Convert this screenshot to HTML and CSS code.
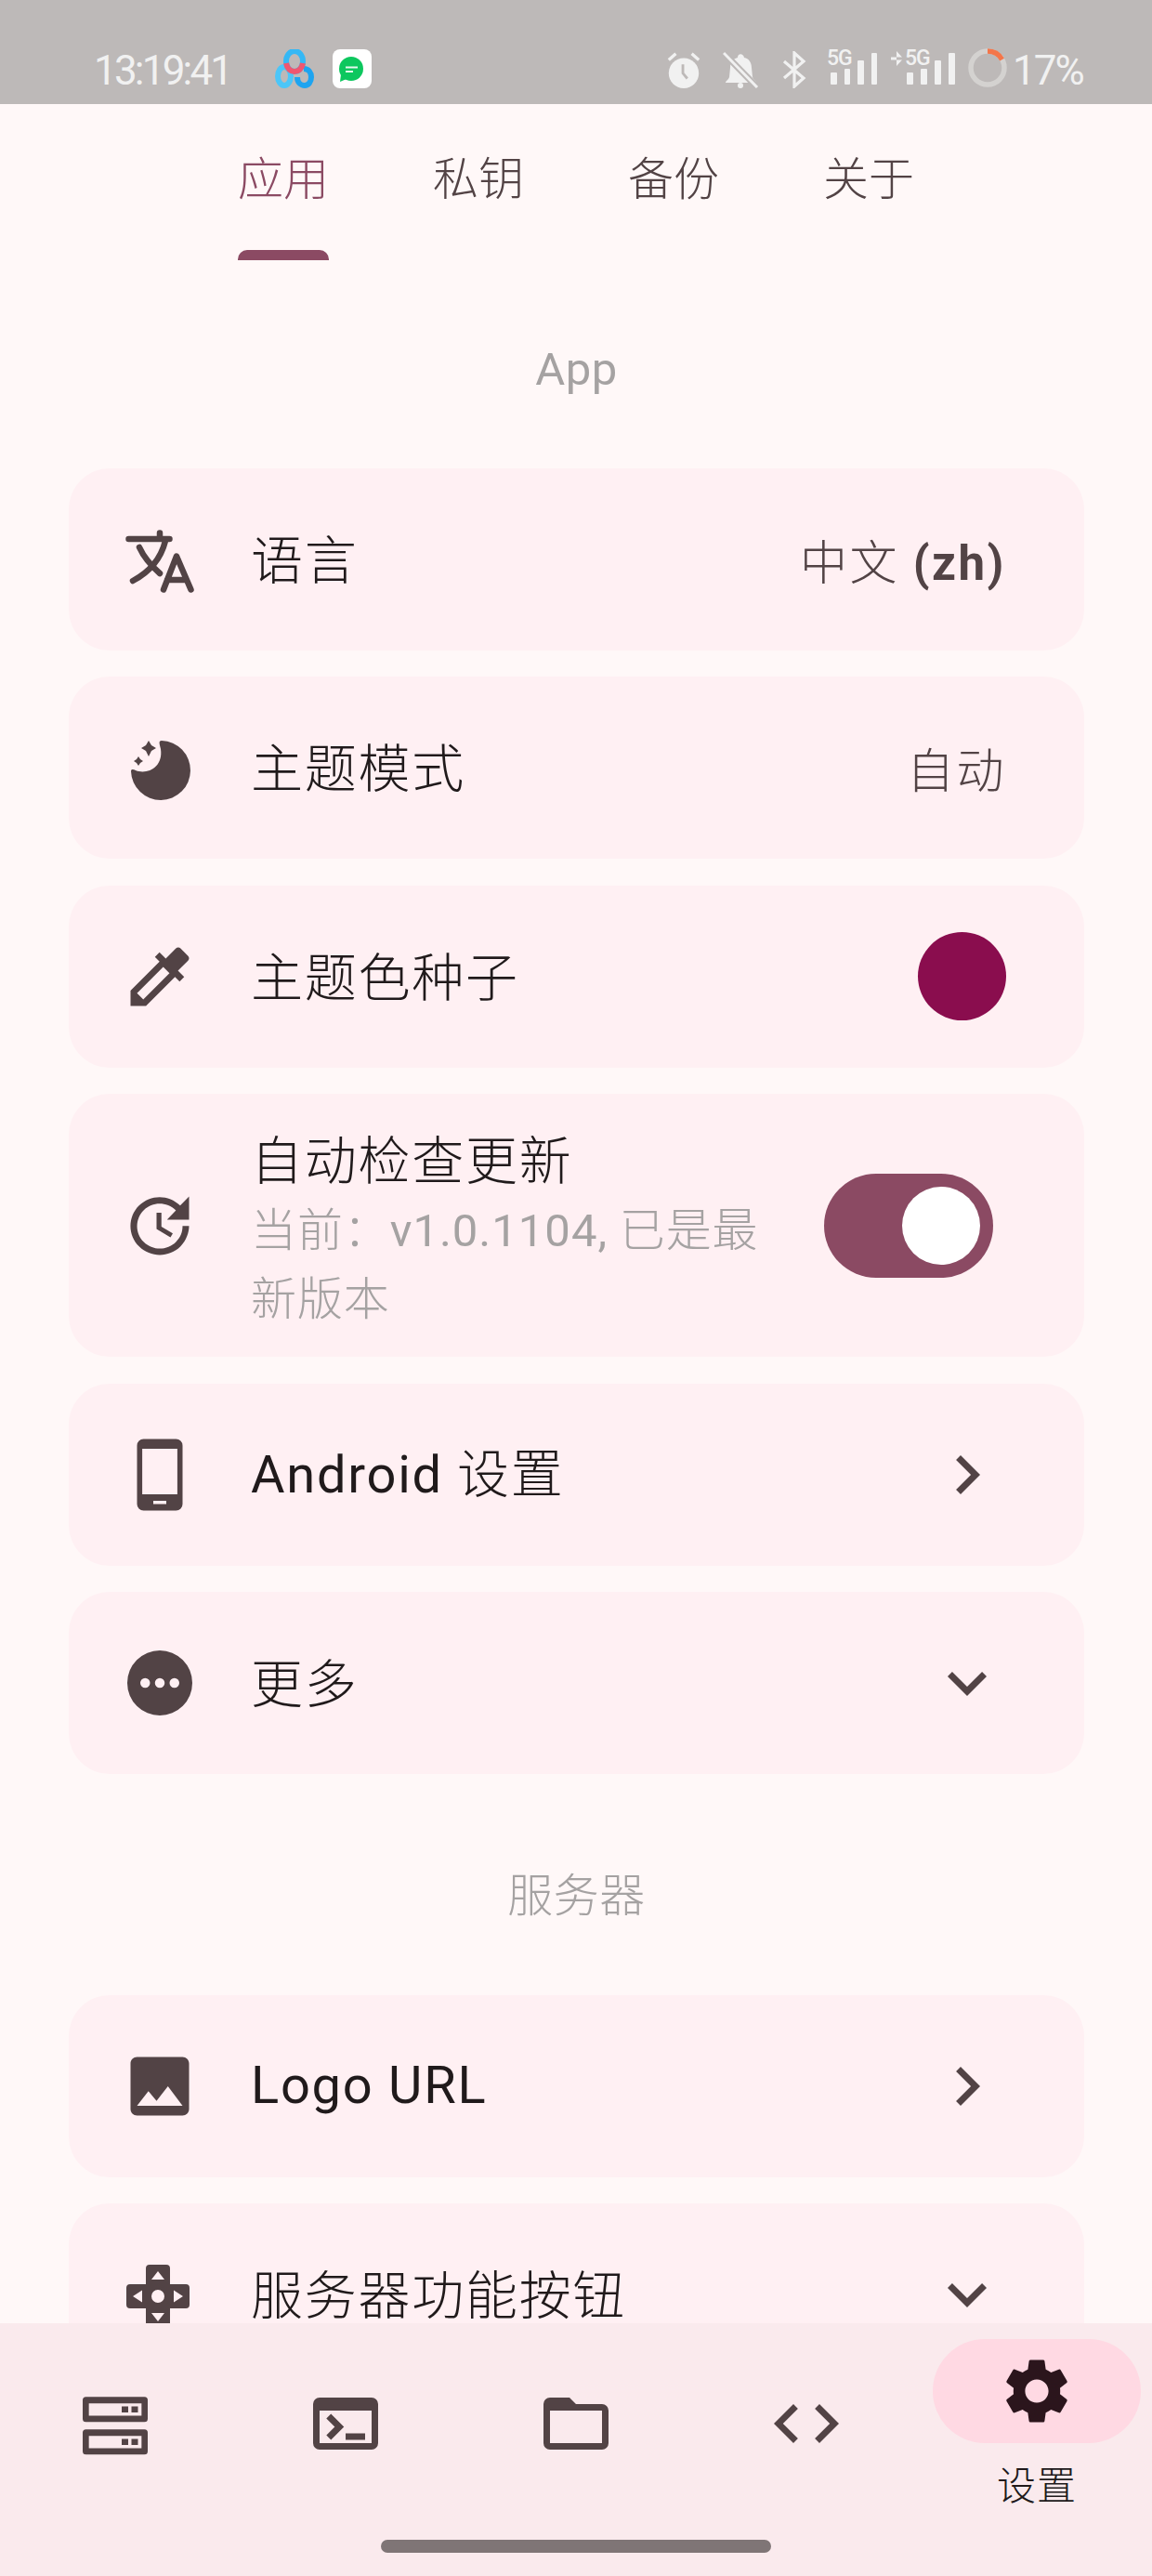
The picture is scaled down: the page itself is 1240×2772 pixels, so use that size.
FILE: index.html
```html
<!DOCTYPE html>
<html lang="zh">
<head>
    <meta charset="UTF-8">
    <title>设置</title>
    <link rel="stylesheet" href="styles.css">
</head>
<body>
<div class="screen">
    <div class="status-bar">
        <div class="status-left">
            <span class="clock">13:19:41</span>
            <svg class="app-icon baidu" viewBox="0 0 42 42"><g fill="none" stroke-width="6"><ellipse cx="21" cy="13" rx="9" ry="11" stroke="#35b8f5"/><ellipse cx="10" cy="29" rx="7" ry="10" stroke="#4cc6f8"/><path d="M24 30c0 6 4 9 8 9s7-4 7-9-3-9-8-9" stroke="#1ea4f0"/><path d="M12 15c1 6 5 9 9 9s8-3 9-9" stroke="#f0566f"/></g></svg>
            <svg class="app-icon chat" viewBox="0 0 42 42"><rect width="42" height="42" rx="8" fill="#fff"/><circle cx="20" cy="21" r="13" fill="#0dc75e"/><path d="M9 27l-1 8 7-3z" fill="#0dc75e"/><path d="M14 19.500h13M14 24h8" stroke="#e6f8ee" stroke-width="1.800" fill="none"/></svg>
        </div>
        <div class="status-right">
            <svg class="st-icon alarm" viewBox="0 0 36 42"><circle cx="18" cy="25" r="17" fill="#f1f1f1"/><path d="M17 15v10l5 6" stroke="#bdb9b8" stroke-width="3" fill="none"/><path d="M1 10l8-7M35 10l-8-7" stroke="#f1f1f1" stroke-width="3.500"/></svg>
            <svg class="st-icon mute" viewBox="0 0 39 40"><path d="M3 34c0-2 3-3 4-6l1-10c0-7 4-10 8-11 0-5 6-5 7 0 5 1 8 5 8 11l1 10c1 3 4 4 4 6z" fill="#f1f1f1"/><circle cx="19" cy="37" r="3" fill="#f1f1f1"/><path d="M1 2l36 37" stroke="#bdb9b8" stroke-width="7"/><path d="M1 2l36 37" stroke="#f1f1f1" stroke-width="3"/></svg>
            <svg class="st-icon bt" viewBox="0 0 26 40"><path d="M2 11l21 18-10 9V2l10 9L2 29" stroke="#f1f1f1" stroke-width="3.200" fill="none"/></svg>
            <div class="signal">
                <span class="five-g">5G</span>
                <i class="bar b1"></i><i class="bar b2"></i><i class="bar b3"></i><i class="bar b4"></i>
            </div>
            <div class="signal second">
                <span class="arrows"></span>
                <span class="five-g">5G</span>
                <i class="bar b1"></i><i class="bar b2"></i><i class="bar b3"></i><i class="bar b4"></i>
            </div>
            <svg class="battery" viewBox="0 0 42 42"><circle cx="21" cy="21" r="18" fill="none" stroke="#d4d2d0" stroke-width="5.500"/><path d="M21 3a18 18 0 0 1 15.600 9" fill="none" stroke="#f4764a" stroke-width="5.500"/></svg>
            <span class="percent">17%</span>
        </div>
    </div>

    <div class="tabs">
        <div class="tab active">应用<i class="indicator"></i></div>
        <div class="tab">私钥</div>
        <div class="tab">备份</div>
        <div class="tab">关于</div>
    </div>

    <div class="content">
        <div class="section-title first"><span class="latin">App</span></div>

        <div class="card">
            <svg class="icon" viewBox="0 0 84 84"><g fill="none" stroke="#524345" stroke-width="6.500" stroke-linecap="round" stroke-linejoin="round"><path d="M8.500 20h44M42 13.500V20M48 22C43 42 30 56 13 65M20 29c5 11 13 20 22 28M46 74.500l14-36 15.500 36M50 64h20"/></g></svg>
            <div class="label cjk">语言</div>
            <div class="value">中文 <b>(zh)</b></div>
        </div>

        <div class="card">
            <svg class="icon" viewBox="0 0 84 84"><path d="M44 13A32 32 0 1 1 11 46C11 43 14 44 16 45C28 50 46 42 43 22C42 17 40 13 44 13z"/><path d="M30 13l3 5 5 3-5 3-3 6-3-6-5-3 5-3zM19 30l2 3 3 2-3 2-2 3-2-3-3-2 3-2z"/></svg>
            <div class="label cjk">主题模式</div>
            <div class="value">自动</div>
        </div>

        <div class="card">
            <svg class="icon" viewBox="0 0 24 24"><path d="M20.710 5.630l-2.340-2.340c-.39-.39-1.020-.39-1.410 0l-3.120 3.120-1.930-1.910-1.410 1.410 1.420 1.420L3 16.250V21h4.750l8.920-8.920 1.420 1.420 1.410-1.410-1.920-1.920 3.120-3.120c.4-.4.4-1.030.01-1.420zM6.920 19L5 17.080l8.060-8.060 1.920 1.920L6.920 19z"/></svg>
            <div class="label cjk">主题色种子</div>
            <div class="swatch"></div>
        </div>

        <div class="card tall">
            <svg class="icon" viewBox="0 0 24 24"><path d="M21 10.120h-6.780l2.740-2.820c-2.730-2.700-7.150-2.800-9.880-.1-2.730 2.710-2.730 7.080 0 9.790s7.150 2.710 9.880 0C18.320 15.650 19 14.080 19 12.100h2c0 1.980-.88 4.550-2.640 6.290-3.510 3.480-9.210 3.480-12.720 0-3.500-3.470-3.530-9.110-.02-12.580s9.140-3.470 12.650 0L21 3v7.120zM12.500 8v4.250l3.500 2.080-.72 1.210L11 13V8h1.500z"/></svg>
            <div class="label-group">
                <div class="label">自动检查更新</div>
                <div class="sub">当前：<span class="version">v1.0.1104,</span> 已是最<br>新版本</div>
            </div>
            <div class="switch"><i class="thumb"></i></div>
        </div>

        <div class="card">
            <svg class="icon" viewBox="0 0 24 24"><path fill-rule="evenodd" d="M7 1h10a2 2 0 0 1 2 2v18a2 2 0 0 1-2 2H7a2 2 0 0 1-2-2V3a2 2 0 0 1 2-2zM6.600 4v14h10.800V4zM10 20v1h4v-1z"/></svg>
            <div class="label"><span class="latin">Android</span> 设置</div>
            <svg class="chevron" viewBox="0 0 24 24"><path d="M10 6L8.590 7.410 13.170 12l-4.580 4.590L10 18l6-6z"/></svg>
        </div>

        <div class="card">
            <svg class="icon" viewBox="0 0 24 24"><path d="M12 2a10 10 0 1 0 0 20 10 10 0 0 0 0-20zM7.500 13.500a1.500 1.500 0 1 1 0-3 1.500 1.500 0 0 1 0 3zm4.500 0a1.500 1.500 0 1 1 0-3 1.500 1.500 0 0 1 0 3zm4.500 0a1.500 1.500 0 1 1 0-3 1.500 1.500 0 0 1 0 3z"/></svg>
            <div class="label cjk">更多</div>
            <svg class="chevron" viewBox="0 0 24 24"><path d="M16.590 8.590L12 13.170 7.410 8.590 6 10l6 6 6-6z"/></svg>
        </div>

        <div class="section-title second">服务器</div>

        <div class="card">
            <svg class="icon" viewBox="0 0 24 24"><path d="M21 19V5c0-1.100-.9-2-2-2H5c-1.100 0-2 .9-2 2v14c0 1.100.9 2 2 2h14c1.100 0 2-.9 2-2zM8.500 13.500l2.500 3.010L14.500 12l4.500 6H5l3.500-4.500z"/></svg>
            <div class="label logo"><span class="latin">Logo URL</span></div>
            <svg class="chevron" viewBox="0 0 24 24"><path d="M10 6L8.590 7.410 13.170 12l-4.580 4.590L10 18l6-6z"/></svg>
        </div>

        <div class="card">
            <svg class="icon" viewBox="0 0 84 84"><path fill-rule="evenodd" d="M31 10h18a4 4 0 0 1 4 4v17h17a4 4 0 0 1 4 4v18a4 4 0 0 1-4 4H53v17a4 4 0 0 1-4 4H31a4 4 0 0 1-4-4V57H10a4 4 0 0 1-4-4V35a4 4 0 0 1 4-4h17V14a4 4 0 0 1 4-4zM40 17l-7 9h14zM40 71l7-9H33zM13 44l10 6.500v-13zM67 44l-10-6.500v13zM40 37a7 7 0 1 0 0 14 7 7 0 0 0 0-14z"/></svg>
            <div class="label cjk">服务器功能按钮</div>
            <svg class="chevron" viewBox="0 0 24 24"><path d="M16.590 8.590L12 13.170 7.410 8.590 6 10l6 6 6-6z"/></svg>
        </div>
    </div>

    <div class="bottom-nav">
        <div class="nav-item">
            <svg class="nav-icon" viewBox="0 0 24 24"><path fill-rule="evenodd" d="M3 3.750h18a1 1 0 0 1 1 1v5.750a1 1 0 0 1-1 1H3a1 1 0 0 1-1-1V4.750a1 1 0 0 1 1-1zM3.900 5.750V9.600h16.200V5.750zM3 13.750h18a1 1 0 0 1 1 1v5.750a1 1 0 0 1-1 1H3a1 1 0 0 1-1-1v-5.750a1 1 0 0 1 1-1zM3.900 15.750v3.850h16.200v-3.850zM14 6.700h2v1.900h-2zm3 0h2v1.900h-2zm-3 10h2v1.900h-2zm3 0h2v1.900h-2z"/></svg>
        </div>
        <div class="nav-item">
            <svg class="nav-icon" viewBox="0 0 24 24"><path d="M20 4H4a2 2 0 0 0-2 2v12a2 2 0 0 0 2 2h16a2 2 0 0 0 2-2V6a2 2 0 0 0-2-2zm0 14H4V8h16v10zm-2-1h-6v-2h6v2zM7.500 17l-1.410-1.410L8.670 13l-2.590-2.590L7.500 9l4 4-4 4z"/></svg>
        </div>
        <div class="nav-item">
            <svg class="nav-icon" viewBox="0 0 24 24"><path d="M20 6h-8l-2-2H4a2 2 0 0 0-2 2v12a2 2 0 0 0 2 2h16a2 2 0 0 0 2-2V8a2 2 0 0 0-2-2zm0 12H4V8h16v10z"/></svg>
        </div>
        <div class="nav-item">
            <svg class="nav-icon" viewBox="0 0 24 24"><path d="M9.400 16.600L4.800 12l4.600-4.600L8 6l-6 6 6 6zm5.200 0l4.600-4.600-4.600-4.600L16 6l6 6-6 6z"/></svg>
        </div>
        <div class="nav-item selected">
            <div class="pill">
                <svg class="nav-icon gear" viewBox="0 0 24 24"><path d="M19.140 12.940c.04-.3.060-.61.060-.94 0-.32-.02-.64-.07-.94l2.030-1.580a.49.490 0 0 0 .12-.61l-1.920-3.320a.488.488 0 0 0-.59-.22l-2.390.96c-.5-.38-1.030-.7-1.620-.94l-.36-2.540a.484.484 0 0 0-.48-.41h-3.840c-.24 0-.43.170-.47.410l-.36 2.540c-.59.240-1.130.570-1.620.94l-2.390-.96c-.22-.08-.47 0-.59.220L2.740 8.870c-.12.210-.08.470.12.610l2.030 1.580c-.05.300-.09.630-.09.940s.02.640.07.940l-2.030 1.580a.49.490 0 0 0-.12.610l1.920 3.320c.12.220.37.290.59.220l2.390-.96c.5.380 1.030.7 1.620.94l.36 2.540c.05.240.24.410.48.410h3.840c.24 0 .44-.17.470-.41l.36-2.540c.59-.24 1.130-.56 1.620-.94l2.390.96c.22.080.47 0 .59-.22l1.920-3.320c.12-.22.070-.47-.12-.61l-2.010-1.580zM12 15.600c-1.980 0-3.600-1.620-3.600-3.600s1.620-3.600 3.600-3.600 3.600 1.620 3.600 3.600-1.620 3.600-3.600 3.600z"/></svg>
            </div>
            <div class="nav-label">设置</div>
        </div>
        <div class="home-bar"></div>
    </div>
</div>
</body>
</html>
```

FILE: styles.css
```css
*{
    margin: 0;
    padding: 0;
    box-sizing: border-box;
}
html,body{
    height: 100%;
    overflow: hidden;
}
body{
    background: #fff8f8;
    font-family: "Roboto", "Noto Sans CJK SC", sans-serif;
    font-weight: 200;
    color: #201a1b;
}
.screen{
    width: 1240px;
    height: 2772px;
    position: relative;
    overflow: hidden;
    display: flex;
    flex-direction: column;
}

/* status bar */
.status-bar{
    height: 112px;
    flex: none;
    background: #bdb9b8;
    display: flex;
    justify-content: space-between;
    padding: 52px 75px 0 101px;
    color: #f1f1f1;
}
.status-left,
.status-right{
    display: flex;
    align-items: flex-start;
}
.clock{
    font-size: 44px;
    font-weight: 400;
    letter-spacing: -2.8px;
    line-height: 44px;
    width: 147px;
    margin: 2px 48px 0 0;
}
.app-icon{
    width: 42px;
    height: 42px;
    margin: 1px 20px 0 0;
}
.st-icon{
    height: 40px;
    margin-top: 3px;
}
.st-icon.alarm{
    width: 36px;
    margin-right: 24px;
}
.st-icon.mute{
    width: 39px;
    margin-right: 25px;
}
.st-icon.bt{
    width: 26px;
    margin-right: 22px;
}
.signal{
    position: relative;
    width: 54px;
    height: 42px;
    margin-right: 15px;
    display: flex;
    align-items: flex-end;
    gap: 8px;
    padding: 0 0 3px 4px;
}
.signal.second{
    width: 69px;
    padding-left: 17px;
    margin-right: 14px;
}
.five-g{
    position: absolute;
    top: 1px;
    left: 0;
    font-size: 23px;
    font-weight: 500;
    line-height: 20px;
    letter-spacing: -1px;
}
.signal.second .five-g{
    left: 15px;
}
.arrows{
    position: absolute;
    left: 0;
    top: 3px;
    width: 12px;
    height: 16px;
    background: #f1f1f1;
    clip-path: polygon(50% 0, 100% 40%, 0 40%, 0 60%, 100% 60%, 50% 100%);
}
.bar{
    display: block;
    width: 7px;
    background: #f1f1f1;
    border-radius: 1px;
}
.bar.b1{ height: 13px; }
.bar.b2{ height: 17px; }
.bar.b3{ height: 26px; }
.bar.b4{ height: 34px; }
.battery{
    width: 42px;
    height: 42px;
    margin-right: 6px;
}
.percent{
    font-size: 44px;
    font-weight: 400;
    letter-spacing: -2px;
    line-height: 44px;
    width: 75px;
    margin-top: 2px;
}

/* tabs */
.tabs{
    flex: none;
    height: 168px;
    display: flex;
    justify-content: center;
    gap: 112px;
    font-size: 49px;
    color: #524345;
    padding-top: 50px;
}
.tab{
    position: relative;
    width: 98px;
    line-height: 64px;
    text-align: center;
}
.tab.active{
    color: #8b4a63;
}
.indicator{
    position: absolute;
    left: 0;
    top: 107px;
    width: 98px;
    height: 11px;
    background: #8b4a63;
    border-radius: 10px 10px 0 0;
}

/* list */
.content{
    flex: none;
    padding: 0 73px 0 74px;
    display: flex;
    flex-direction: column;
    gap: 28.4px;
}
.section-title{
    text-align: center;
    font-size: 49px;
    line-height: 60px;
    letter-spacing: .5px;
    color: #a5a2a2;
    height: 60px;
    flex: none;
    padding-top: 2px;
}
.section-title.first{
    margin: 86px 0 49.6px;
}
.section-title.second{
    margin: 71.6px 0 49.6px;
}
.card{
    height: 196px;
    background: #fff0f3;
    border-radius: 44px;
    display: flex;
    align-items: center;
    padding: 0 84px 0 56px;
    flex: none;
}
.card.tall{
    height: 283px;
    padding-right: 98px;
}
.icon{
    width: 84px;
    height: 84px;
    fill: #524345;
    flex: none;
    margin-right: 56px;
}
.label{
    flex: 1;
    font-size: 56px;
    letter-spacing: 1.75px;
    line-height: 72px;
    color: #201a1b;
}
.label.cjk{
    padding-top: 4px;
}
.label.logo{
    padding-bottom: 2px;
}
.latin{
    font-weight: 400;
}
.value{
    font-size: 51px;
    color: #524345;
    letter-spacing: 2.5px;
}
.value b{
    font-weight: 700;
}
.label-group{
    flex: 1;
    padding: 12px 46px 0 0;
}
.sub{
    font-size: 49px;
    letter-spacing: .875px;
    line-height: 74px;
    margin-top: 2px;
    color: #a5a2a2;
}
.version{
    font-weight: 400;
    letter-spacing: 1px;
}
.swatch{
    width: 95px;
    height: 95px;
    border-radius: 50%;
    background: #8a0d4e;
}
.switch{
    width: 182px;
    height: 112px;
    border-radius: 56px;
    background: #8b4a63;
    position: relative;
    flex: none;
}
.thumb{
    position: absolute;
    top: 14px;
    right: 14px;
    width: 84px;
    height: 84px;
    border-radius: 50%;
    background: #fff;
}
.chevron{
    width: 84px;
    height: 84px;
    fill: #524345;
    flex: none;
}

/* bottom navigation */
.bottom-nav{
    position: absolute;
    left: 0;
    right: 0;
    bottom: 0;
    height: 272px;
    background: #faeaed;
    display: grid;
    grid-template-columns: repeat(5, 248px);
}
.nav-item{
    padding-top: 66px;
    display: flex;
    flex-direction: column;
    align-items: center;
}
.nav-icon{
    width: 84px;
    height: 84px;
    fill: #524345;
}
.nav-item.selected{
    padding-top: 17px;
}
.pill{
    width: 224px;
    height: 112px;
    border-radius: 56px;
    background: #ffd9e3;
    display: flex;
    align-items: center;
    justify-content: center;
}
.gear{
    fill: #2b151c;
}
.nav-label{
    font-size: 42px;
    letter-spacing: 1px;
    line-height: 52px;
    margin-top: 21px;
    color: #201a1b;
}
.home-bar{
    position: absolute;
    left: 410px;
    bottom: 25px;
    width: 420px;
    height: 14px;
    border-radius: 7px;
    background: #7f7576;
}
```
